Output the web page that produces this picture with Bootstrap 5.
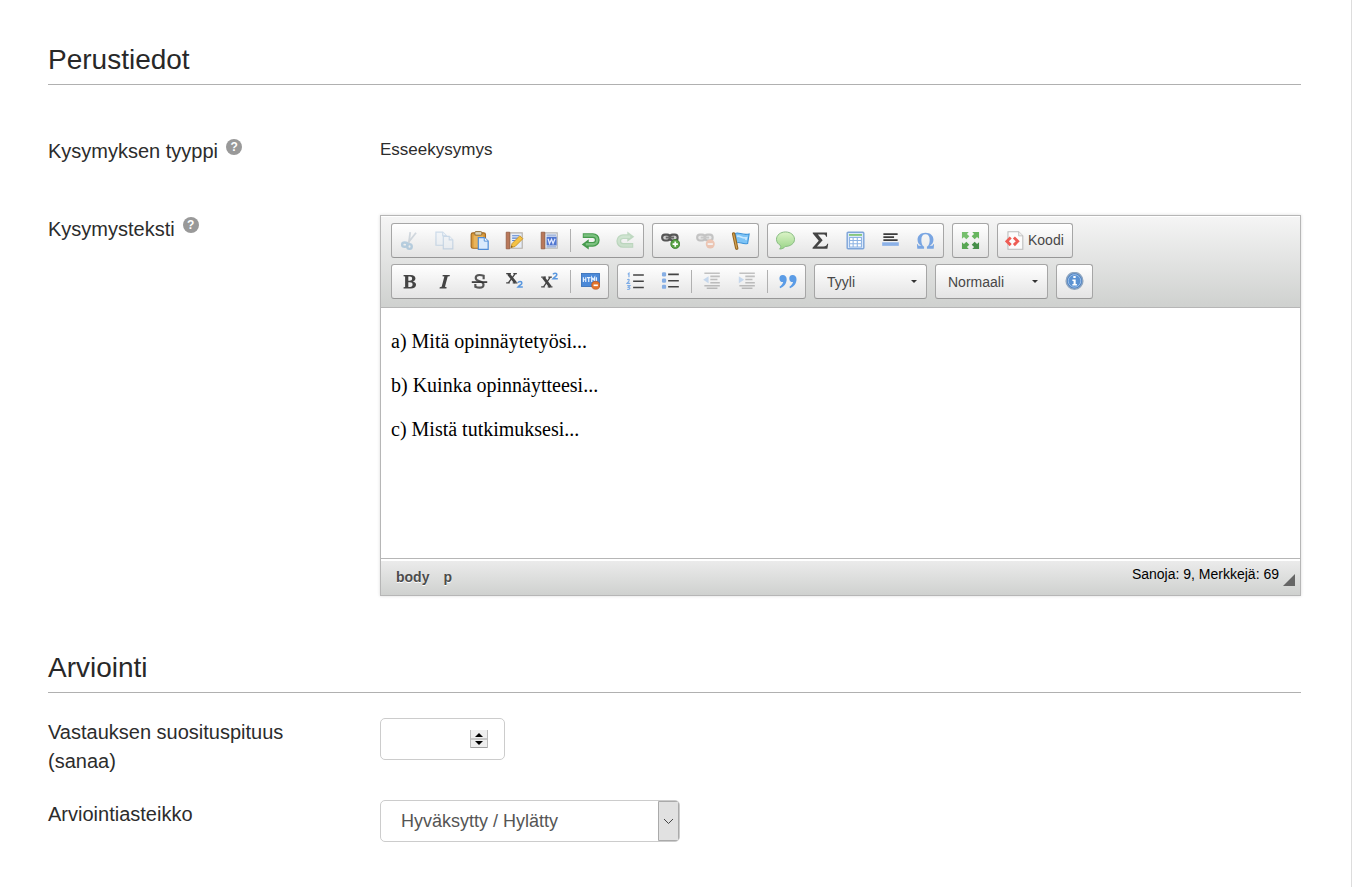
<!DOCTYPE html>
<html lang="fi">
<head>
<meta charset="utf-8">
<meta name="viewport" content="width=device-width, initial-scale=1">
<title>Esseekysymys</title>
<link href="https://cdn.jsdelivr.net/npm/bootstrap@5.3.0/dist/css/bootstrap.min.css" rel="stylesheet">
<style>
body { font-family: "Liberation Sans", Arial, sans-serif; color: #2c2c2c; background: #fff; }
.page-frame { margin-right: 6px; border-right: 1px solid #ddd; padding: 43px 50px 24px 48px; }
.section-title { font-size: 28px; line-height: 34px; padding-bottom: 7px; border-bottom: 1px solid #b0b0b0; margin: 0 0 1px; color: #282828; }
.section-basic { display: grid; gap: 49px; }
.section-basic .section-title { margin-bottom: 3px; }
.section-grading { margin-top: 55px; display: grid; gap: 24px; }
.field-label { flex: 0 0 332px; padding-right: 40px; font-size: 20px; line-height: 29px; }
.field-value { font-size: 17px; line-height: 25px; }
.help-dot { width: 16px; height: 16px; border-radius: 50%; background: #999; color: #fff; font-size: 12px; line-height: 16px; font-weight: 700; border: 0; padding: 0; margin-top: 2px; margin-left: 8px; text-align: center; }
.rte { border: 1px solid #b6b6b6; box-shadow: 0 0 3px rgba(0,0,0,.15); }
.rte-bar { padding: 7px 10px 8px; gap: 6px; background: linear-gradient(#f5f5f5, #cfd1cf); border-bottom: 1px solid #b6b6b6; box-shadow: inset 0 1px 0 #fff; }
.rte-line { gap: 6px 8px; }
.tool-set { border: 1px solid #a6a6a6; border-bottom-color: #979797; border-radius: 3px; background: linear-gradient(#fff, #e4e4e4); height: 35px; }
.tool { width: 35px; height: 33px; border: 0; background: none; padding: 0 1px 0 0; display: flex; align-items: center; justify-content: center; color: #474747; font-size: 14px; }
.tool svg { width: 19px; height: 19px; }
.tool-wide { width: auto; padding: 0 8px 0 7px; gap: 4px; }
.tool:disabled { opacity: .3; }
.tool-gap { width: 6px; padding: 5px 2px; }
.tool-gap::before { content: ""; display: block; width: 1px; height: 23px; background: #b0b0b0; margin-left: 1px; }
.tool-pick { width: 113px; padding: 2px 12px 0; font-size: 14px; color: #474747; appearance: none;
  background: url("data:image/svg+xml,%3Csvg xmlns='http://www.w3.org/2000/svg' width='6' height='3'%3E%3Cpath d='M0 0h6L3 3z' fill='%23333'/%3E%3C/svg%3E") no-repeat right 9px center, linear-gradient(#fff, #e4e4e4); }
.rte-text { min-height: 250px; padding: 21px 10px; font-family: "Liberation Serif", "Times New Roman", serif; font-size: 20px; line-height: 24px; color: #000; }
.rte-text p { margin-bottom: 20px; }
.rte-foot { height: 37px; border-top: 1px solid #b6b6b6; padding: 2px 5px 0 8px; background: linear-gradient(#fff 2px, #ebebeb 2px, #cfd1cf); font-size: 14px; }
.rte-foot a { color: #4c4c4c; font-weight: 700; text-decoration: none; padding: 0 7px; line-height: 32px; text-shadow: 0 1px 0 #fff; }
.word-count { color: #000; line-height: 26px; }
.grip { border-left: 12px solid transparent; border-bottom: 12px solid #666; margin: 13px 0 0 4px; height: 0; }
.entry { height: 42px; border: 1px solid #ccc; border-radius: 5px; color: #555; font-size: 18px; appearance: none; }
.entry-number { width: 125px; padding: 0 36px 0 20px; -moz-appearance: textfield;
  background: url("data:image/svg+xml,%3Csvg xmlns='http://www.w3.org/2000/svg' width='18' height='18'%3E%3Cpath fill='%23eee' d='M0 0h18v18H0z'/%3E%3Cpath d='M0 17.5h18M0 9h18' stroke='%23a0a0a0'/%3E%3Cpath d='M.5 0v18M17.5 0v18' stroke='%23bbb'/%3E%3Cpath d='M5 7l4-4 4 4zM5 11l4 4 4-4z'/%3E%3C/svg%3E") no-repeat right 16px center #fff; }
.entry-number::-webkit-inner-spin-button { appearance: none; margin: 0; }
.entry-select { width: 300px; padding: 1px 36px 0 20px;
  background: url("data:image/svg+xml,%3Csvg xmlns='http://www.w3.org/2000/svg' width='21' height='40'%3E%3Cpath d='M.5.5h20v39H.5z' fill='%23e1e1e1' stroke='%23aaa'/%3E%3Cpath d='M6 18l4.500 4.500 4.500-4.500' fill='none' stroke='%23444'/%3E%3C/svg%3E") no-repeat right center #fff; }
</style>
</head>
<body>
<main class="page-frame min-vh-100">
  <section class="section-basic">
    <h2 class="section-title fw-normal">Perustiedot</h2>
    <div class="d-flex">
      <div class="field-label d-flex align-items-start">Kysymyksen tyyppi<button type="button" class="help-dot" aria-label="Ohje">?</button></div>
      <div class="field-value flex-grow-1">Esseekysymys</div>
    </div>
    <div class="d-flex">
      <div class="field-label d-flex align-items-start" id="question-label">Kysymysteksti<button type="button" class="help-dot" aria-label="Ohje">?</button></div>
      <div class="rte flex-grow-1">
        <div class="rte-bar d-flex flex-column">
          <div class="rte-line d-flex flex-wrap">
            <div class="tool-set d-flex">
              <button class="tool" disabled aria-label="Leikkaa"><svg viewBox="0 0 16 16" fill="none"><path d="M8.600 1L7.400 10.500M13.500 1.500L6 11" stroke="#7d93a8" stroke-width="1.500"/><ellipse cx="4" cy="11.500" rx="2.200" ry="1.800" stroke="#3680b8" stroke-width="2"/><ellipse cx="8" cy="13" rx="1.900" ry="2" stroke="#3680b8" stroke-width="2"/></svg></button>
              <button class="tool" disabled aria-label="Kopioi"><svg viewBox="0 0 16 16" fill="#e5effa" stroke="#6b9bcb"><path d="M.8 1h5.700l3 3v8H.8z"/><path d="M6.500 1v3h3" /><path d="M7 4.500h5l3 3V15H7z"/><path d="M12 4.500v3h3"/></svg></button>
              <button class="tool" aria-label="Liitä"><svg viewBox="0 0 16 16"><rect x="1" y="1.500" width="12" height="13" rx="1.500" fill="#d99a3c" stroke="#a56a20"/><path d="M3 4h8v10H3z" fill="#e9b45c"/><rect x="4" y=".5" width="6" height="3" rx="1" fill="#ddd3b5" stroke="#8e6b34" stroke-width=".8"/><path d="M7 5.500h5l3.300 3V15.500H7z" fill="#d9eafd" stroke="#4f8dd8"/><path d="M12 5.500v3h3" fill="#fff" stroke="#4f8dd8" stroke-width=".8"/></svg></button>
              <button class="tool" aria-label="Liitä tekstinä"><svg viewBox="0 0 16 16"><path d="M4 1.500h10.500v13H4z" fill="#e6edf8" stroke="#b5b0a9"/><path d="M1 1h3v14H1z" fill="#b9785a" stroke="#8e553a" stroke-width=".6"/><path d="M6 4h6M6 6h5M6 8h3" stroke="#5782cf"/><path d="M5 14l1-3.500L12.500 4 15 6.500 8.500 13z" fill="#f4c244" stroke="#c9932a" stroke-width=".8"/><path d="M5 14l.5-1.500 1 .8z" fill="#654321"/></svg></button>
              <button class="tool" aria-label="Liitä Wordista"><svg viewBox="0 0 16 16"><path d="M4 1.500h10.500v13H4z" fill="#eef3fa" stroke="#b5b5b5"/><path d="M1 1h3v14H1z" fill="#b9785a" stroke="#8e553a" stroke-width=".6"/><path d="M5.500 3.500h8M5.500 13.300h8" stroke="#8fa5d0"/><path d="M5.500 4.800h8.500v7.400H5.500z" fill="#5076d0"/><path d="M6.800 6.500L8 10.500l1.700-3.500L11 10.500l1.700-4" fill="none" stroke="#dfe8ff" stroke-width="1.100"/></svg></button>
              <span class="tool-gap"></span>
              <button class="tool" aria-label="Kumoa"><svg viewBox="0 0 16 16"><path d="M1.500 3.800H10a3.500 3.500 0 0 1 0 7.400H5" fill="none" stroke="#459a4c" stroke-width="4"/><path d="M6.500 7v8.500L.6 11.300z" fill="#459a4c"/><path d="M2.200 3.800H10a3.500 3.500 0 0 1 0 7.400H4" fill="none" stroke="#7bc17f" stroke-width="2"/></svg></button>
              <button class="tool" disabled aria-label="Toista"><svg viewBox="0 0 16 16"><path d="M14.500 12.200H6a3.500 3.500 0 0 1 0-7.400h5" fill="none" stroke="#459a4c" stroke-width="4"/><path d="M9.500.5V9l5.900-4.200z" fill="#459a4c"/><path d="M13.800 12.200H6a3.500 3.500 0 0 1 0-7.400h6" fill="none" stroke="#7bc17f" stroke-width="2"/></svg></button>
            </div>
            <div class="tool-set d-flex">
              <button class="tool" aria-label="Lisää linkki"><svg viewBox="0 0 16 16"><g fill="#ccc" stroke="#555" stroke-width="1.800"><rect x="1" y="3" width="6.500" height="5" rx="2.300"/><rect x="7.500" y="3" width="6.500" height="5" rx="2.300"/></g><path d="M4 5.500h7" stroke="#666" stroke-width="1.600"/><circle cx="12" cy="11" r="3.800" fill="#5aa446" stroke="#2f7122" stroke-width=".6"/><path d="M12 8.800v4.400M9.800 11h4.400" stroke="#fff" stroke-width="1.400"/></svg></button>
              <button class="tool" disabled aria-label="Poista linkki"><svg viewBox="0 0 16 16"><g fill="#ccc" stroke="#555" stroke-width="1.800"><rect x="1" y="3" width="6.500" height="5" rx="2.300"/><rect x="7.500" y="3" width="6.500" height="5" rx="2.300"/></g><path d="M4 5.500h7" stroke="#666" stroke-width="1.600"/><circle cx="12" cy="11" r="3.800" fill="#e8672c"/><path d="M9.800 11h4.400" stroke="#fff" stroke-width="1.500"/></svg></button>
              <button class="tool" aria-label="Ankkuri"><svg viewBox="0 0 16 16"><path d="M3.500 2C7 .5 9 4 15.300 2.500l-1.300 8C9 11.500 8 8.500 4.500 10z" fill="#7cc3f6" stroke="#3c93d9" stroke-width=".9"/><path d="M5 4.500c3-1 4 2 8 1.200l-.5 2" stroke="#c6e7ff" stroke-width="1.400" fill="none"/><path d="M2.200 2.500L4.800 14.500" stroke="#956521" stroke-width="2.800" stroke-linecap="round"/><path d="M2.200 2.500L4.800 14.500" stroke="#d4a454" stroke-linecap="round"/></svg></button>
            </div>
            <div class="tool-set d-flex">
              <button class="tool" aria-label="Kommentti"><svg viewBox="0 0 16 16"><defs><linearGradient id="bubble" x2="0" y2="1"><stop stop-color="#dcf4c8"/><stop offset="1" stop-color="#9ad488"/></linearGradient></defs><path d="M8 .8C3.800.8.4 3.500.4 7c0 2.400 1.500 4.200 3.400 5.200.5 1.200 0 2.200-.8 3 2 0 3.800-.8 4.800-2.200 4.400 0 7.800-2.500 7.800-6S12.200.8 8 .8z" fill="url(#bubble)" stroke="#84b97e" stroke-width=".8"/></svg></button>
              <button class="tool" aria-label="Kaava"><svg viewBox="0 0 16 16"><path d="M1.500 1.200h12v3.600h-.8C12.300 3.300 11.700 3 10 3H5.800l4 4.700L5 13h5.500c2 0 2.700-.7 3.200-2.300h.8L13.800 15H1.300v-1l5.200-5.700L1.500 2.200z" fill="#444"/></svg></button>
              <button class="tool" aria-label="Taulukko"><svg viewBox="0 0 16 16"><rect x="1" y="1" width="14" height="14" rx=".8" fill="#dbe9fb" stroke="#7ea5d9" stroke-width="1.200"/><path d="M2.500 3.300h11" stroke="#87c77c" stroke-width="1.600"/><path d="M3 5.500h10v8H3z" fill="#fff"/><path d="M3 5.500h10v8H3zM3 8h10M3 10.800h10M6 5.500v8M9.500 5.500v8" fill="none" stroke="#8db3e3" stroke-width=".9"/></svg></button>
              <button class="tool" aria-label="Vaakaviiva"><svg viewBox="0 0 16 16"><path d="M2 2.700h12M2 5.200h9M2 7.700h12" stroke="#3c3c3c" stroke-width="1.500"/><path d="M1 9.500h14v3H1z" fill="#8bb1e8"/></svg></button>
              <button class="tool" aria-label="Erikoismerkki"><svg viewBox="0 0 16 16"><path fill-rule="evenodd" d="M8 1.500c4 0 6.700 2.300 6.700 5.800 0 2.400-1.200 4.200-3.300 5.200h1.600c.9 0 1.300-.4 1.400-1.300h.8L14.900 15H9.200v-1.700c1.600-1.100 2.300-3 2.300-5.800C11.500 4.300 10.300 2.700 8 2.700S4.500 4.300 4.500 7.500c0 2.800.7 4.700 2.300 5.800V15H1.100l-.3-3.800h.8c.1.900.5 1.300 1.400 1.300h1.600C2.500 11.500 1.300 9.700 1.300 7.300c0-3.500 2.700-5.800 6.700-5.800z" fill="#79a5e2"/></svg></button>
            </div>
            <div class="tool-set d-flex">
              <button class="tool" aria-label="Suurenna"><svg viewBox="0 0 16 16"><path d="M.8.8h5.700L5 2.500l2 2L4.500 7l-2-2L.8 6.500z" fill="#76bf6d"/><path d="M15.200.8H9.500L11 2.500l-2 2L11.500 7l2-2 1.700 1.500z" fill="#67b65f"/><path d="M.8 15.200h5.700L5 13.500l2-2L4.500 9l-2 2L.8 9.500z" fill="#58a653"/><path d="M15.200 15.200H9.500l1.500-1.700-2-2L11.500 9l2 2 1.700-1.500z" fill="#468f4a"/></svg></button>
            </div>
            <div class="tool-set d-flex">
              <button class="tool tool-wide"><svg viewBox="0 0 16 16"><path d="M2.500.6h9l3.500 3.500v11.300H2.500z" fill="#fcfcfc" stroke="#bbb" stroke-width=".9"/><path d="M11.500.6v3.500H15" fill="#eee" stroke="#bbb" stroke-width=".7"/><path d="M4.800 5.500L1.600 8.700l3.200 3.200M7.500 5.500l3.200 3.200-3.200 3.200" fill="none" stroke="#ee5c54" stroke-width="2.400"/></svg>Koodi</button>
            </div>
          </div>
          <div class="rte-line d-flex flex-wrap">
            <div class="tool-set d-flex">
              <button class="tool" aria-label="Lihavoitu"><svg viewBox="0 0 16 16"><path fill-rule="evenodd" d="M3 2.500h6c2.500 0 4 1 4 2.900 0 1.400-1 2.200-2.200 2.500 1.600.3 2.700 1.300 2.700 2.800 0 2-1.700 3.200-4.300 3.200H3v-1l1.300-.3V3.800L3 3.500zm4 1.200v3.700h1.200c1.300 0 2-.6 2-1.900 0-1.200-.6-1.800-1.900-1.800zM7 8.600v4h1.500c1.400 0 2.100-.7 2.100-2s-.8-2-2.300-2z" fill="#444"/></svg></button>
              <button class="tool" aria-label="Kursivoitu"><svg viewBox="0 0 16 16"><path d="M6.500 2.500h6l-.2 1-1.600.3-2.300 8.700 1.400.4-.2 1H3.800l.2-1 1.600-.4 2.300-8.700-1.600-.3z" fill="#444"/></svg></button>
              <button class="tool" aria-label="Yliviivattu"><svg viewBox="0 0 16 16"><path d="M11.500 6V3.200C10 2.600 8.800 2.500 8 2.500 5.800 2.500 4.800 3.800 4.800 5c0 3.500 6.600 2.200 6.600 5.700 0 1.500-1.300 2.500-3.300 2.500-1.200 0-2.500-.3-3.600-.8V10" fill="none" stroke="#555" stroke-width="1.800"/><path d="M1.500 8.500h13" stroke="#333" stroke-width="1.400"/></svg></button>
              <button class="tool" aria-label="Alaindeksi"><svg viewBox="0 0 16 16" fill="none"><path d="M2.800 1.500l6 7.500" stroke="#444" stroke-width="2.400"/><path d="M8.500 1.500L3 9M1 1.300h4M7 1.300h3M1 9.200h3M6.500 9.200h4" stroke="#444" stroke-width="1.100"/><path d="M11 9c.5-1.300 3.200-1.300 3.200.2 0 1.300-1.700 1.800-3.200 3.500h4" stroke="#5b98df" stroke-width="1.300"/></svg></button>
              <button class="tool" aria-label="Yläindeksi"><svg viewBox="0 0 16 16" fill="none"><path d="M2.800 4.500l6 8" stroke="#444" stroke-width="2.400"/><path d="M8.500 4.500l-5.500 8M1 4.300h4M7 4.300h3M1 12.600h3M6.500 12.600h4" stroke="#444" stroke-width="1.100"/><path d="M11 2c.5-1.300 3.200-1.300 3.200.2 0 1.300-1.700 1.800-3.200 3.500h4" stroke="#5b98df" stroke-width="1.300"/></svg></button>
              <span class="tool-gap"></span>
              <button class="tool" aria-label="Poista muotoilu"><svg viewBox="0 0 16 16"><rect x=".4" y="1.200" width="15.200" height="11" fill="#4b89d8" stroke="#346db8" stroke-width=".7"/><path d="M2 4.500v4M4 4.500v4M2 6.500h2M5 4.800h3M6.500 4.800v3.700M9 8.500v-4l1.300 2 1.200-2v3M13 4.500v3" fill="none" stroke="#e5f1ff"/><circle cx="12.400" cy="11.200" r="3.400" fill="#e3742d" stroke="#b6501b" stroke-width=".5"/><path d="M10.600 11.200h3.600" stroke="#fff" stroke-width="1.400"/></svg></button>
            </div>
            <div class="tool-set d-flex">
              <button class="tool" aria-label="Numeroitu luettelo"><svg viewBox="0 0 16 16" fill="none"><path d="M6 2.500h9M6 7.800h9M6 13h9" stroke="#444" stroke-width="1.300"/><path d="M1.500 2l1-1v3.500M1 6.500c2-1 2.500.5 0 3h2.500M1 11.500h2.300L2 13c2 0 1.500 2-1 1.700" stroke="#7fade6" stroke-width="1"/></svg></button>
              <button class="tool" aria-label="Luettelo"><svg viewBox="0 0 16 16"><path d="M6 2h9M6 7.300h9M6 12.500h9" stroke="#444" stroke-width="1.300"/><g fill="#86aee4"><rect x=".8" y=".3" width="3.500" height="3.500" rx="1"/><rect x=".8" y="5.500" width="3.500" height="3.500" rx="1"/><rect x=".8" y="10.700" width="3.500" height="3.500" rx="1"/></g></svg></button>
              <span class="tool-gap"></span>
              <button class="tool" disabled aria-label="Pienennä sisennystä"><svg viewBox="0 0 16 16"><path d="M2 1h13M7 3.700h8M7 6.300h6M7 9h8M2 11.500h13M4 13.700h9" stroke="#444" stroke-width="1.300"/><path d="M5.500 3.500v6L1 6.500z" fill="#5e99df"/></svg></button>
              <button class="tool" disabled aria-label="Lisää sisennystä"><svg viewBox="0 0 16 16"><path d="M2 1h13M7 3.700h8M7 6.300h6M7 9h8M2 11.500h13M4 13.700h9" stroke="#444" stroke-width="1.300"/><path d="M1.500 3.500v6L6 6.500z" fill="#5e99df"/></svg></button>
              <span class="tool-gap"></span>
              <button class="tool" aria-label="Lainaus"><svg viewBox="0 0 16 16" fill="#5b9ce6"><path d="M4 2.500a3 3 0 1 0 .4 6C4 10 3 11.300 1.300 12.500l.5 1.200C5.300 12.500 7.300 9.500 7.300 6.200 7.300 3.800 6 2.500 4 2.500z"/><path d="M12.300 2.500a3 3 0 1 0 .4 6c-.4 1.500-1.400 2.800-3.100 4l.5 1.200c3.500-1.200 5.500-4.200 5.500-7.500 0-2.400-1.300-3.700-3.300-3.700z"/></svg></button>
            </div>
            <select class="tool-set tool-pick" aria-label="Tyyli"><option>Tyyli</option></select>
            <select class="tool-set tool-pick" aria-label="Muotoilu"><option>Normaali</option></select>
            <div class="tool-set d-flex">
              <button class="tool" aria-label="Tietoja"><svg viewBox="0 0 16 16"><circle cx="8" cy="7.500" r="7" fill="#4e83c4" stroke="#8fa6c0" stroke-width="1.300"/><circle cx="8" cy="7.500" r="5.300" fill="#5b92d2" stroke="#a8c9ee" stroke-width=".7"/><path d="M7 3.300h2V5H7zM6.200 6.300H9V10h1v1.300H6.200V10h1V7.600h-1z" fill="#fff"/></svg></button>
            </div>
          </div>
        </div>
        <div class="rte-text" contenteditable="true" role="textbox" aria-labelledby="question-label" spellcheck="false">
          <p>a) Mitä opinnäytetyösi...</p>
          <p>b) Kuinka opinnäytteesi...</p>
          <p>c) Mistä tutkimuksesi...</p>
        </div>
        <div class="rte-foot d-flex align-items-start">
          <a href="#">body</a><a href="#">p</a>
          <span class="word-count ms-auto">Sanoja: 9, Merkkejä: 69</span>
          <span class="grip"></span>
        </div>
      </div>
    </div>
  </section>
  <section class="section-grading">
    <h2 class="section-title fw-normal">Arviointi</h2>
    <div class="d-flex">
      <label class="field-label" for="length">Vastauksen suosituspituus (sanaa)</label>
      <div><input type="number" id="length" class="entry entry-number"></div>
    </div>
    <div class="d-flex">
      <label class="field-label" for="scale">Arviointiasteikko</label>
      <div><select id="scale" class="entry entry-select"><option>Hyväksytty / Hylätty</option></select></div>
    </div>
  </section>
</main>
<script src="https://cdn.jsdelivr.net/npm/bootstrap@5.3.0/dist/js/bootstrap.bundle.min.js"></script>
</body>
</html>
